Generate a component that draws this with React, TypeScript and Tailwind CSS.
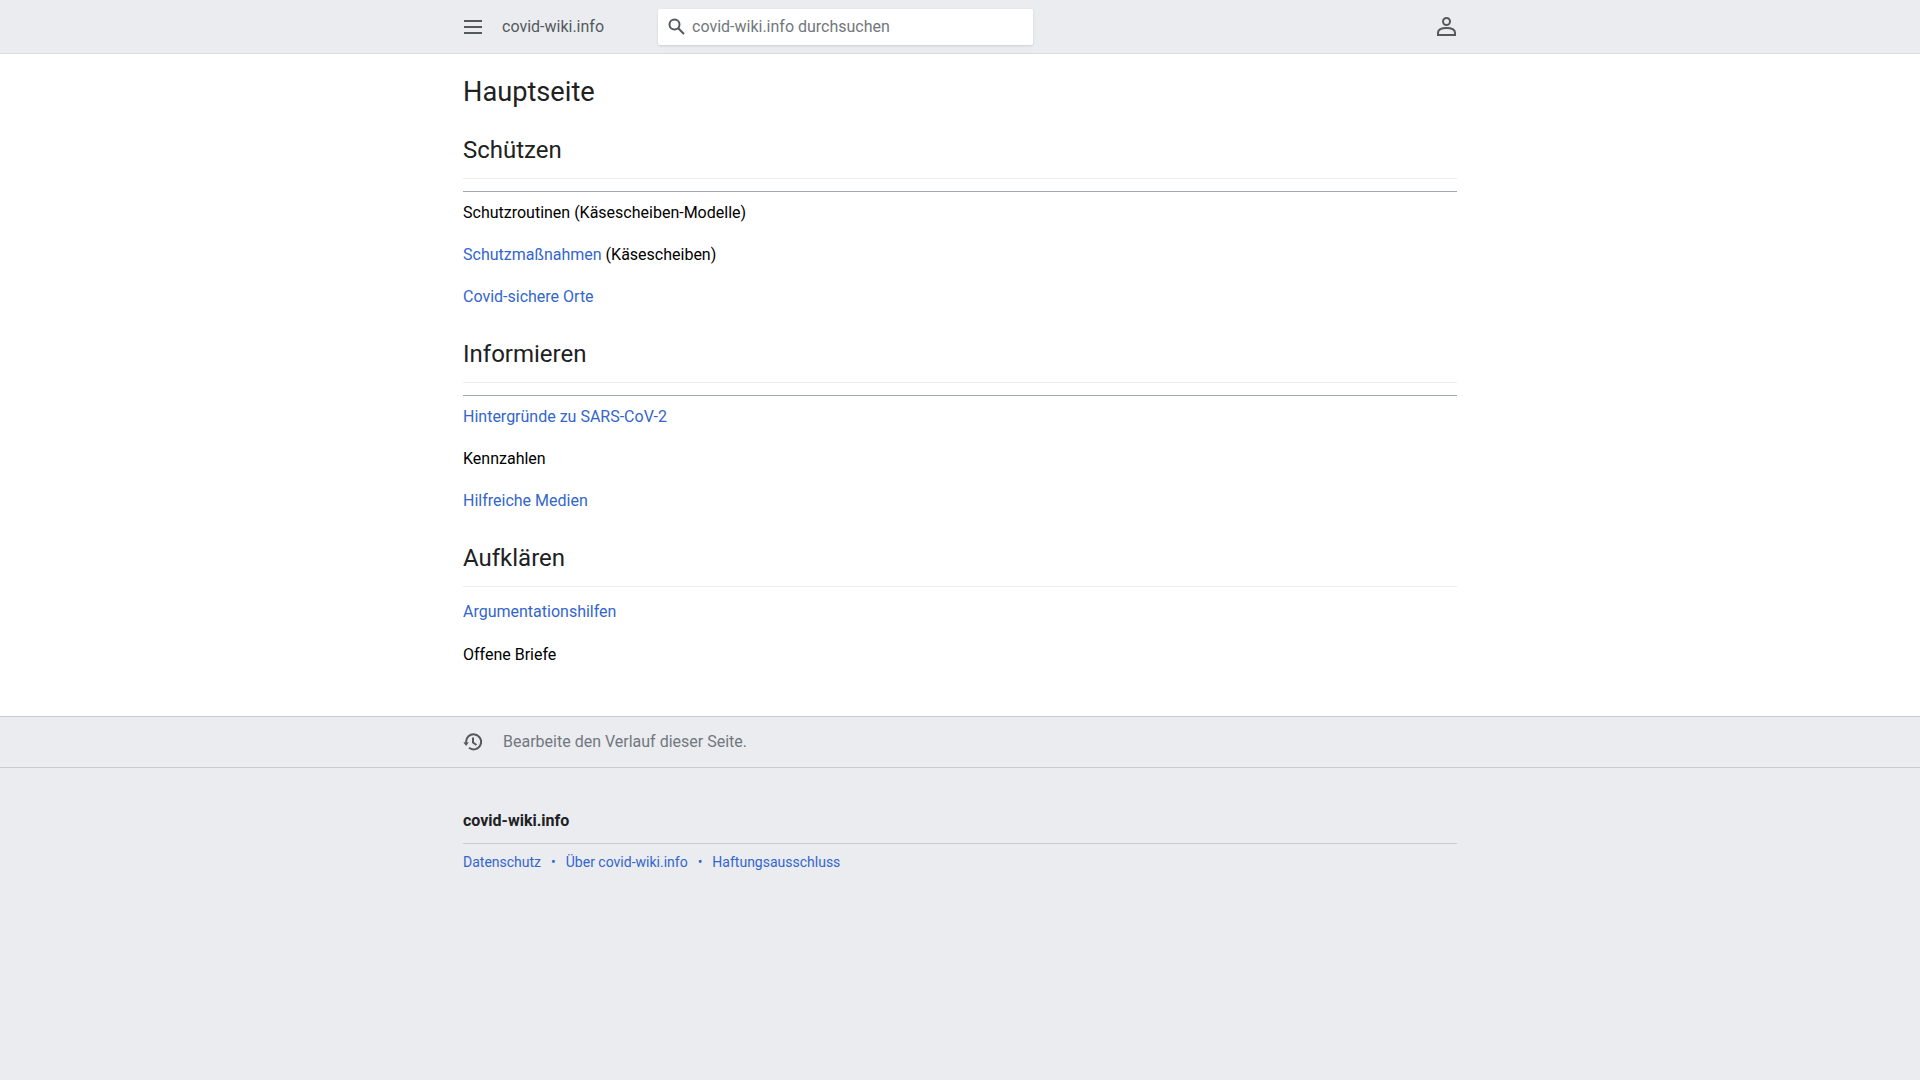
function Section({ title, rule, children }: { title: string; rule?: boolean; children: React.ReactNode }) {
  return (
    <section>
      <h2 className="mt-[26px] border-b border-[#eaecf0] pt-px pb-[9px] text-[24px] leading-[37px] text-[#202122]">{title}</h2>
      {rule && <hr className="mt-[12px] border-t border-[#a2a9b1]" />}
      {children}
    </section>
  );
}

function Line({ first, children }: { first?: boolean; children: React.ReactNode }) {
  return <p className={first ? 'mt-[9px] h-[24px] text-[16px] leading-[24px] text-[#000]' : 'mt-[18px] h-[24px] text-[16px] leading-[24px] text-[#000]'}>{children}</p>;
}

function Link({ children }: { children: React.ReactNode }) {
  return <a className="text-[#3366cc]">{children}</a>;
}

export default function App() {
  return (
    <div className="flex min-h-[1080px] flex-col bg-[#eaecf0] font-['Roboto',sans-serif]">
      <header className="h-[54px] border-b border-[#d8dbe0] bg-[#eaecf0]">
        <div className="mx-auto flex h-[53px] w-[994px] items-center">
          <svg viewBox="0 0 20 20" className="h-[20px] w-[20px] text-[#54595d]" fill="currentColor">
            <path d="M1 3h18v2H1zM1 9h18v2H1zM1 15h18v2H1z" />
          </svg>
          <span className="ml-[19px] w-[156px] text-[16px] text-[#54595d]">covid-wiki.info</span>
          <div className="flex h-[36px] w-[375px] items-center rounded-[2px] bg-white pl-[10px] shadow-sm">
            <svg viewBox="0 0 20 20" className="h-[20px] w-[20px] text-[#54595d]" fill="none" stroke="currentColor" strokeWidth="2">
              <circle cx="6.5" cy="7.5" r="5" />
              <path d="M10.2 11.2L16 17" />
            </svg>
            <span className="ml-[4px] pt-px text-[16px] text-[#72777d]">covid-wiki.info durchsuchen</span>
          </div>
          <svg viewBox="0 0 20 20" className="ml-auto h-[20px] w-[20px] text-[#54595d]" fill="none" stroke="currentColor" strokeWidth="2">
            <circle cx="9.5" cy="4.5" r="3.5" />
            <path d="M1 18v-2.2c0-2.8 3-4.8 8.5-4.8s8.5 2 8.5 4.8V18z" />
          </svg>
        </div>
      </header>
      <main className="bg-white pb-[49px]">
        <div className="mx-auto w-[994px]">
          <h1 className="pt-[25px] text-[27.2px] leading-[26px] text-[#202122]">Hauptseite</h1>
          <Section title="Schützen" rule>
            <Line first>Schutzroutinen (Käsescheiben-Modelle)</Line>
            <Line><Link>Schutzmaßnahmen</Link> (Käsescheiben)</Line>
            <Line><Link>Covid-sichere Orte</Link></Line>
          </Section>
          <Section title="Informieren" rule>
            <Line first><Link>Hintergründe zu SARS-CoV-2</Link></Line>
            <Line>Kennzahlen</Line>
            <Line><Link>Hilfreiche Medien</Link></Line>
          </Section>
          <Section title="Aufklären">
            <p className="mt-[13px] h-[24px] text-[16px] leading-[24px]"><Link>Argumentationshilfen</Link></p>
            <p className="mt-[19px] h-[24px] text-[16px] leading-[24px] text-[#000]">Offene Briefe</p>
          </Section>
        </div>
      </main>
      <div className="h-[52px] border-y border-[#c8ccd1]">
        <div className="mx-auto flex h-full w-[994px] items-center">
          <svg viewBox="0 0 20 20" className="h-[20px] w-[20px] text-[#54595d]" fill="none" stroke="currentColor" strokeWidth="2">
            <path d="M3.1 10.5A7.5 7.5 0 1 1 6 15.8" />
            <path d="M10 5.5V10.5l3.5 2.5" />
            <path d="M0.4 10.2h5.4l-2.7 3.8z" fill="currentColor" stroke="none" />
          </svg>
          <span className="ml-[20px] text-[16px] text-[#72777d]">Bearbeite den Verlauf dieser Seite.</span>
        </div>
      </div>
      <footer className="flex-1">
        <div className="mx-auto w-[994px]">
          <div className="mt-[41px] border-b border-[#c8ccd1] pb-[10px] text-[16px] font-bold leading-[24px] text-[#202122]">covid-wiki.info</div>
          <div className="mt-[8px] flex items-center text-[14px] leading-[20px] text-[#3366cc]">
            <a>Datenschutz</a>
            <span className="mx-[10px] text-[#3366cc]">•</span>
            <a>Über covid-wiki.info</a>
            <span className="mx-[10px] text-[#3366cc]">•</span>
            <a>Haftungsausschluss</a>
          </div>
        </div>
      </footer>
    </div>
  );
}
